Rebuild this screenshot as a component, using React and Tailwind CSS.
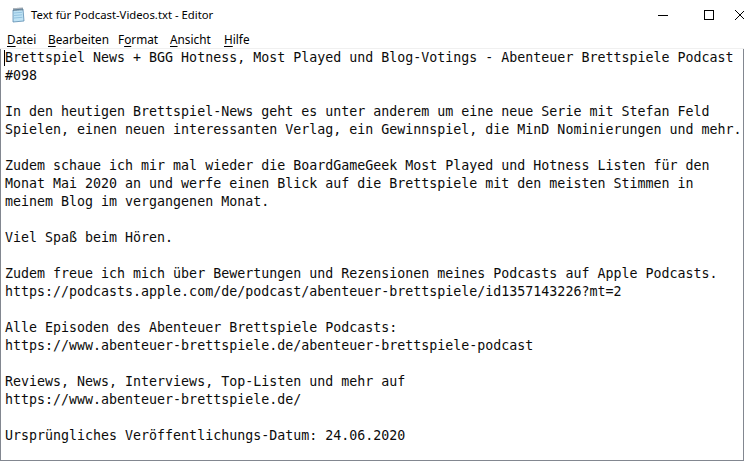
import React from 'react';

const LINES = [
  'Brettspiel News + BGG Hotness, Most Played und Blog-Votings - Abenteuer Brettspiele Podcast',
  '#098',
  '',
  'In den heutigen Brettspiel-News geht es unter anderem um eine neue Serie mit Stefan Feld',
  'Spielen, einen neuen interessanten Verlag, ein Gewinnspiel, die MinD Nominierungen und mehr.',
  '',
  'Zudem schaue ich mir mal wieder die BoardGameGeek Most Played und Hotness Listen für den',
  'Monat Mai 2020 an und werfe einen Blick auf die Brettspiele mit den meisten Stimmen in',
  'meinem Blog im vergangenen Monat.',
  '',
  'Viel Spaß beim Hören.',
  '',
  'Zudem freue ich mich über Bewertungen und Rezensionen meines Podcasts auf Apple Podcasts.',
  'https://podcasts.apple.com/de/podcast/abenteuer-brettspiele/id1357143226?mt=2',
  '',
  'Alle Episoden des Abenteuer Brettspiele Podcasts:',
  'https://www.abenteuer-brettspiele.de/abenteuer-brettspiele-podcast',
  '',
  'Reviews, News, Interviews, Top-Listen und mehr auf',
  'https://www.abenteuer-brettspiele.de/',
  '',
  'Ursprüngliches Veröffentlichungs-Datum: 24.06.2020',
];

// menu items with the accelerator letter underlined, each in a fixed slot
const MENU = [
  { pre: '', key: 'D', rest: 'atei', w: 'w-[41px]' },
  { pre: '', key: 'B', rest: 'earbeiten', w: 'w-[70px]' },
  { pre: 'F', key: 'o', rest: 'rmat', w: 'w-[52px]' },
  { pre: '', key: 'A', rest: 'nsicht', w: 'w-[54px]' },
  { pre: '', key: 'H', rest: 'ilfe', w: 'w-[40px]' },
];

const NotepadIcon = () => (
  <svg width="16" height="16" viewBox="0 0 16 16">
    <path d="M3 3 L13 2 L14 14 L3 15 Z" fill="#bfe3f5" stroke="#5a8bb0" strokeWidth="0.8" />
    <path d="M4 6 L12 5.3 M4 8.5 L12.2 7.8 M4 11 L12.4 10.3" stroke="#7fb3d6" strokeWidth="0.7" />
    <path d="M4 1 V4 M6 1 V4 M8 0.8 V3.8 M10 0.6 V3.6 M12 0.5 V3.5" stroke="#4a5a6a" strokeWidth="0.9" />
  </svg>
);

export default function App() {
  return (
    <div className="w-[744px] h-[461px] bg-white flex flex-col overflow-hidden" style={{ fontFamily: '"Noto Sans", "Open Sans", sans-serif' }}>
      <div className="h-[30px] flex items-center shrink-0">
        <div className="pl-[10px] pr-[4px] flex items-center"><NotepadIcon /></div>
        <span className="text-[11.3px] text-black ml-[1px] pt-px">Text für Podcast-Videos.txt - Editor</span>
        <div className="ml-auto flex h-full">
          <div className="w-[46px] flex items-center justify-center">
            <div className="w-[10px] h-px bg-black" />
          </div>
          <div className="w-[46px] flex items-center justify-center">
            <div className="w-[10px] h-[10px] border border-black" />
          </div>
          <div className="w-[12px] flex items-center justify-end overflow-hidden">
            <svg width="10" height="10" viewBox="0 0 10 10" className="shrink-0 mr-[-1px]">
              <path d="M0 0 L10 10 M10 0 L0 10" stroke="#000" strokeWidth="1" />
            </svg>
          </div>
        </div>
      </div>
      <div className="h-[18px] flex items-center shrink-0 text-[11.8px] text-black pl-[7px] pt-px">
        {MENU.map((m, i) => (
          <span key={i} className={`${m.w} shrink-0`}>
            {m.pre}
            <span className="underline underline-offset-2">{m.key}</span>
            {m.rest}
          </span>
        ))}
      </div>
      <div className="h-px bg-[#f0f0f0] shrink-0" />
      <div className="flex-1 border-l border-r border-b border-[#828790] relative">
        <div className="absolute left-[3px] top-[1px] w-px h-[16px] bg-black" />
        <div
          className="pl-[4px] whitespace-pre text-[13.3px] leading-[18px] text-[#0b0b0b]"
          style={{ fontFamily: '"DejaVu Sans Mono", "Liberation Mono", monospace' }}
        >
          {LINES.map((l, i) => (
            <div key={i} className="h-[18px]">{l}</div>
          ))}
        </div>
      </div>
    </div>
  );
}
